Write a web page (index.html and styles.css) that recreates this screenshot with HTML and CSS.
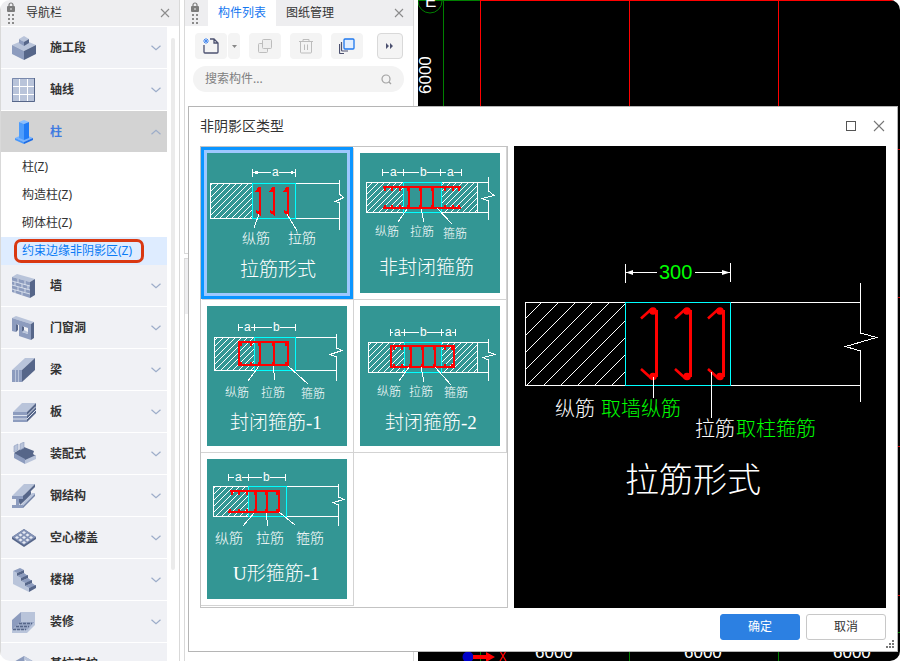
FILE: index.html
```html
<!DOCTYPE html>
<html lang="zh-CN">
<head>
  <meta charset="UTF-8">
  <meta name="viewport" content="width=device-width, initial-scale=1.0">
  <title>非阴影区类型</title>
  <link rel="stylesheet" href="styles.css">
</head>
<body>
  <!-- Shared symbols and hatch patterns -->
  <svg class="defs" width="0" height="0" aria-hidden="true">
    <defs>
      <symbol id="chevron" viewBox="0 0 10 6"><path d="M0.5 0.8 L5 4.8 L9.5 0.8" fill="none" stroke="#9dadc9" stroke-width="1.2"/></symbol>
      <symbol id="close" viewBox="0 0 10 10"><path d="M1 1 L9 9 M9 1 L1 9" fill="none" stroke="#8c8c8c" stroke-width="1.1"/></symbol>
      <symbol id="lock" viewBox="0 0 8 23">
        <path d="M2 5 V3 a2 2 0 0 1 4 0 V5" fill="none" stroke="#7c7c7c" stroke-width="1.2"/>
        <rect x="0" y="4" width="8" height="6" rx="1" fill="#7c7c7c"/>
        <rect x="3.5" y="6" width="1" height="2" fill="#eee"/>
        <path d="M1 12h2v2H1z M5 12h2v2H5z M1 16h2v2H1z M5 16h2v2H5z M1 20h2v2H1z M5 20h2v2H5z" fill="#8a8a8a"/>
      </symbol>
      <symbol id="hook" viewBox="0 0 18 74" overflow="visible">
        <path d="M1 11.500 L11 2.500 M1 62 L11 71" fill="none" stroke="#f00" stroke-width="2.600"/>
        <path d="M16.500 3 V70" stroke="#f00" stroke-width="3"/>
        <circle cx="13" cy="4" r="3.800" fill="#f00"/><circle cx="13" cy="69.500" r="3.800" fill="#f00"/>
      </symbol>
      <pattern id="hatch" width="6" height="6" patternUnits="userSpaceOnUse"><path d="M-1 1 l2 -2 M0 6 l6 -6 M5 7 l2 -2" stroke="#fff" shape-rendering="crispEdges"/></pattern>
      <pattern id="hatchBig" x="11" y="156" width="17" height="17" patternUnits="userSpaceOnUse"><path d="M-1 1 l2 -2 M0 17 l17 -17 M16 18 l2 -2" stroke="#fff" shape-rendering="crispEdges"/></pattern>
    </defs>
  </svg>

  <div class="app">
    <!-- Navigation -->
    <aside class="nav">
      <header class="panel-head">
        <svg class="lock"><use href="#lock"/></svg>
        <span class="panel-title">导航栏</span>
        <button type="button" class="close-btn" aria-label="关闭"><svg><use href="#close"/></svg></button>
      </header>
      <div class="nav-body">
        <div class="nav-list">
          <button type="button" class="nav-item">
            <svg class="nav-icon" viewBox="0 0 24 24"><path d="M0 9 12 4 24 9 12 15z" fill="#b9c4da"/><path d="M0 9 12 15V24L0 18z" fill="#8d9cbe"/><path d="M24 9 12 15V24L24 18z" fill="#566689"/><path d="M7 3 12 0 17 3 12 6z" fill="#b9c4da"/><path d="M7 3 12 6V10L7 7z" fill="#8d9cbe"/><path d="M17 3 12 6V10L17 7z" fill="#566689"/></svg>
            <span>施工段</span><svg class="chevron"><use href="#chevron"/></svg>
          </button>
          <button type="button" class="nav-item">
            <svg class="nav-icon" viewBox="0 0 24 24"><path d="M0 0H23V24H0z" fill="#b9c4da"/><path d="M.5 24V.5H23" fill="none" stroke="#7888ac"/><path d="M0 23.500H22.500V0" fill="none" stroke="#566689"/><path d="M7.500 1V23M15.500 1V23M1 8.500H22M1 16.500H22" stroke="#fff"/></svg>
            <span>轴线</span><svg class="chevron"><use href="#chevron"/></svg>
          </button>
          <button type="button" class="nav-item active">
            <svg class="nav-icon" viewBox="0 0 24 24"><path d="M3 18 12 14 21 18 12 22z" fill="#7ab5ff"/><path d="M3 18 12 22V24L3 20z" fill="#4797fb"/><path d="M21 18 12 22V24L21 20z" fill="#1c6ce6"/><path d="M7 2 12 0 17 2 12 4z" fill="#8abfff"/><path d="M7 2 12 4V20L7 18z" fill="#4f9dfb"/><path d="M17 2 12 4V20L17 18z" fill="#207bf5"/></svg>
            <span>柱</span><svg class="chevron up"><use href="#chevron"/></svg>
          </button>
          <div class="sub-list">
            <a href="#" class="sub-item">柱(Z)</a>
            <a href="#" class="sub-item">构造柱(Z)</a>
            <a href="#" class="sub-item">砌体柱(Z)</a>
            <a href="#" class="sub-item current">约束边缘非阴影区(Z)</a>
          </div>
          <button type="button" class="nav-item">
            <svg class="nav-icon" viewBox="0 0 24 24"><path d="M0 3 5 0 23 5 18 8z" fill="#b9c4da"/><path d="M0 3 18 8V24L0 18z" fill="#8d9cbe"/><path d="M18 8 23 5V21L18 24z" fill="#566689"/><path d="M0 7 18 12M0 11 18 16M0 15 18 20M6 5V9M13 7V11M3 8V12M10 10V14M16 11V15M6 13V17M13 14V18M3 16V19M10 18V21" stroke="#dde3ee" stroke-width=".9"/></svg>
            <span>墙</span><svg class="chevron"><use href="#chevron"/></svg>
          </button>
          <button type="button" class="nav-item">
            <svg class="nav-icon" viewBox="0 0 24 24"><path d="M0 2 4 0 22 6 19 8z" fill="#b9c4da"/><path d="M0 2 19 8V24L7 20V9L4 8V16L0 15zM10 10V16L16 18V12z" fill="#8d9cbe" fill-rule="evenodd"/><path d="M19 8 22 6V22L19 24z" fill="#566689"/><path d="M4 8 6 9V14L4 16zM10 10 12 11V15L10 16z" fill="#566689"/><path d="M10 16 12 14 16 16V18z" fill="#b9c4da"/></svg>
            <span>门窗洞</span><svg class="chevron"><use href="#chevron"/></svg>
          </button>
          <button type="button" class="nav-item">
            <svg class="nav-icon" viewBox="0 0 24 24"><path d="M0 12 13 0H23L10 12z" fill="#b9c4da"/><path d="M0 12H10V24H0z" fill="#8d9cbe"/><path d="M10 12 23 0V12L10 24z" fill="#566689"/><path d="M3.500 12V24M6.500 12V24" stroke="#b9c4da"/></svg>
            <span>梁</span><svg class="chevron"><use href="#chevron"/></svg>
          </button>
          <button type="button" class="nav-item">
            <svg class="nav-icon" viewBox="0 0 24 24"><path d="M1 12 10 3H24L15 12z" fill="#b9c4da"/><path d="M1 12H15V22H1z" fill="#8d9cbe"/><path d="M15 12 24 3V13L15 22z" fill="#566689"/><path d="M1 15.500H15L24 6.500M1 19H15L24 10" fill="none" stroke="#dde3ee"/></svg>
            <span>板</span><svg class="chevron"><use href="#chevron"/></svg>
          </button>
          <button type="button" class="nav-item">
            <svg class="nav-icon" viewBox="0 0 24 24"><path d="M2 11 12 5 22 9 21 12 24 14 13 20z" fill="#566689"/><path d="M2 4 6 2V8L2 10zM8 2 12 0V6L8 8z" fill="#b9c4da" stroke="#8d9cbe" stroke-width=".6"/><path d="M2 11 13 17V22L2 16z" fill="#8d9cbe"/><path d="M13 18 24 13V17L13 22z" fill="#b9c4da"/></svg>
            <span>装配式</span><svg class="chevron"><use href="#chevron"/></svg>
          </button>
          <button type="button" class="nav-item">
            <svg class="nav-icon" viewBox="0 0 24 24"><path d="M0 12 12 0H23L11 12z" fill="#b9c4da"/><path d="M11 12 23 0V3L11 15z" fill="#566689"/><path d="M6 15 19 7V11L8 21z" fill="#566689"/><path d="M9 21 20 9H23V11L11 24H9z" fill="#b9c4da"/><path d="M11 22 23 10V12L11 24z" fill="#7282a6"/><path d="M0 12H11V15H7V21H11V24H0V21H4V15H0z" fill="#8d9cbe"/></svg>
            <span>钢结构</span><svg class="chevron"><use href="#chevron"/></svg>
          </button>
          <button type="button" class="nav-item">
            <svg class="nav-icon" viewBox="0 0 24 24"><path d="M0 11 12 3 24 11V13L12 21 0 13z" fill="#566689"/><path d="M0 11 12 3 24 11 12 19z" fill="#8493b6"/><path d="M10 6.500 12 5 14 6.500 12 8zM6.500 9 8.500 7.500 10.500 9 8.500 10.500zM13.500 9 15.500 7.500 17.500 9 15.500 10.500zM10 11.500 12 10 14 11.500 12 13zM3 11.500 5 10 7 11.500 5 13zM17 11.500 19 10 21 11.500 19 13zM6.500 14 8.500 12.500 10.500 14 8.500 15.500zM13.500 14 15.500 12.500 17.500 14 15.500 15.500zM10 16.500 12 15 14 16.500 12 18z" fill="#e8ebf3"/></svg>
            <span>空心楼盖</span><svg class="chevron"><use href="#chevron"/></svg>
          </button>
          <button type="button" class="nav-item">
            <svg class="nav-icon" viewBox="0 0 24 24"><path d="M1 3 5 5V8L9 10V13L13 15V18L17 20V24L1 16z" fill="#b9c4da"/><path d="M1 3 8 0 12 2 5 5zM5 8 12 5 16 8 9 10zM9 13 16 10 20 13 13 15zM13 18 20 15 24 18 17 20z" fill="#8d9cbe"/><path d="M5 5 12 2V5L5 8zM9 10 16 7V10L9 13zM13 15 20 12V15L13 18zM17 20 24 17V20L17 24z" fill="#566689"/></svg>
            <span>楼梯</span><svg class="chevron"><use href="#chevron"/></svg>
          </button>
          <button type="button" class="nav-item">
            <svg class="nav-icon" viewBox="0 0 24 24"><path d="M9 2H23V12H9z" fill="#b9c4da"/><path d="M0 10 9 2V12L0 20z" fill="#8d9cbe"/><path d="M9 12H23L15 21H0V20z" fill="#9aa8c6"/><path d="M0 20H15L23 12V15L15 23H0z" fill="#b9c4da"/><path d="M7 13.500H20M4 16.500H17M1 19.500H14" stroke="#566689" stroke-width="1.400" stroke-dasharray="3 1"/></svg>
            <span>装修</span><svg class="chevron"><use href="#chevron"/></svg>
          </button>
          <button type="button" class="nav-item">
            <svg class="nav-icon" viewBox="0 0 24 24"><path d="M0 11 12 4 24 11V20H0z" fill="#8d9cbe"/><path d="M12 4 24 11V20H12z" fill="#b9c4da"/><path d="M13 8 16 10V16H13z" fill="#fff"/></svg>
            <span>基坑支护</span><svg class="chevron"><use href="#chevron"/></svg>
          </button>
        </div>
        <div class="scrollbar"><div class="thumb-bar"></div></div>
      </div>
    </aside>

    <!-- Component list -->
    <section class="side">
      <div class="components">
        <header class="panel-head">
          <svg class="lock"><use href="#lock"/></svg>
          <button type="button" class="tab selected">构件列表</button>
          <button type="button" class="tab">图纸管理</button>
          <button type="button" class="close-btn" aria-label="关闭"><svg><use href="#close"/></svg></button>
        </header>
        <div class="toolbar">
          <div class="split">
            <button type="button" class="tool" aria-label="新建"><svg width="16" height="16" viewBox="0 0 16 16" fill="none"><path d="M1 7V14a1 1 0 0 0 1 1H14a1 1 0 0 0 1 -1V5L11 1H7M11 1V5H15" stroke="#4c5170" stroke-width="1.300"/><path d="M1 1 5 5M5 1 1 5M3 0V6M0 3H6" stroke="#4a8cf0"/></svg></button>
            <button type="button" class="tool drop" aria-label="更多新建"><svg width="5" height="3" viewBox="0 0 5 3"><path d="M0 0H5L2.500 3z" fill="#888"/></svg></button>
          </div>
          <button type="button" class="tool" aria-label="复制"><svg width="16" height="16" viewBox="0 0 16 16" fill="#eee" stroke="#bdbdbd"><rect x="1.500" y="5.500" width="9" height="9" rx="1"/><rect x="5.500" y="1.500" width="9" height="9" rx="1"/></svg></button>
          <button type="button" class="tool" aria-label="删除"><svg width="16" height="16" viewBox="0 0 16 16" fill="none" stroke="#bdbdbd"><path d="M1 3.500H15M5 3V1.500H11V3M2.500 4V14a1 1 0 0 0 1 1H12.500a1 1 0 0 0 1 -1V4M6.500 6.500V12M9.500 6.500V12"/></svg></button>
          <button type="button" class="tool" aria-label="层间复制"><svg width="16" height="16" viewBox="0 0 16 16" fill="none" stroke="#4c5170"><path d="M.5 6V14.500a1 1 0 0 0 1 1H5M2.500 4V12a1 1 0 0 0 1 1H9" stroke-width="1.200"/><rect x="5" y="1" width="10" height="10" rx="1" fill="#e3efff" stroke="#1f78ee" stroke-width="1.300"/></svg></button>
          <button type="button" class="tool more" aria-label="更多"><svg width="8" height="6" viewBox="0 0 8 6"><path d="M0 0 3 3 0 6zM4 0 7 3 4 6z" fill="#4c5170"/></svg></button>
        </div>
        <div class="search">
          <input type="text" placeholder="搜索构件..." aria-label="搜索构件">
          <svg width="11" height="11" viewBox="0 0 11 11" fill="none" stroke="#a3a3a3" stroke-width="1.200"><circle cx="5" cy="5" r="4"/><path d="M8 8 10 10"/></svg>
        </div>
      </div>
      <div class="props"><div class="props-head"></div></div>
    </section>

    <!-- Drawing area -->
    <main class="canvas">
      <svg class="axes" width="482" height="661" viewBox="0 0 482 661">
        <path d="M62 .5H482M62.500 0V640M211.500 0V640M360.500 0V640" stroke="#f00" fill="none"/>
        <path d="M0 .5H62M25.500 0V640" stroke="#008000" fill="none"/>
        <path d="M62.500 640V661M211.500 640V661M360.500 640V661M480 632.500H482" stroke="#008000"/>
        <path d="M480 149.500H482M480 297.500H482M480 446.500H482M480 595.500H482" stroke="#c00"/>
        <circle cx="12" cy="1" r="12" fill="none" stroke="#008000"/>
        <text x="7" y="7" class="axis-text">E</text>
        <text transform="translate(13 94) rotate(-90)" class="axis-text">6000</text>
        <text x="117" y="658" class="axis-text">6000</text>
        <text x="266" y="658" class="axis-text">6000</text>
        <text x="415" y="658" class="axis-text">6000</text>
        <circle cx="50" cy="657" r="5.500" fill="#0000c8"/>
        <path d="M55 655H68V652L77 657 68 662V659H55z" fill="#f00"/>
        <path d="M82 651 88 661M88 651 82 661" stroke="#f00" stroke-width="1.300"/>
      </svg>
    </main>

    <!-- Type dialog -->
    <div class="dialog" role="dialog" aria-label="非阴影区类型">
      <header class="dialog-head">
        <h1>非阴影区类型</h1>
        <button type="button" class="win-btn" aria-label="最大化"><svg width="12" height="12" viewBox="0 0 12 12"><rect x="1.500" y="1.500" width="9" height="9" fill="none" stroke="#555"/></svg></button>
        <button type="button" class="win-btn" aria-label="关闭"><svg width="12" height="12" viewBox="0 0 12 12"><path d="M1 1 11 11M11 1 1 11" stroke="#777" stroke-width="1.100"/></svg></button>
      </header>
      <div class="dialog-body">
        <div class="types">
          <button type="button" class="type selected">
            <svg class="figure" viewBox="0 0 140 140">
              <rect x="3.500" y="30.500" width="42" height="35" class="wall hatched"/>
              <path class="wall" d="M45 30.500H132.500M45 65.500H132.500M132.500 27V41L136.500 44.500 128.500 48.500 132.500 50V77"/>
              <rect x="45.500" y="30.500" width="43" height="35" class="edge"/>
              <path class="wall" d="M45.500 16V24M88.500 16V24M46 19.500H64M72 19.500H88M46 19.500l4 -1v2zM88 19.500l-4 -1v2z"/>
              <path class="bar" d="M49 39 52 35H53V61L49 58M63 39 66 35H67V61L63 58M77 39 80 35H81V61L77 58"/>
              <path class="node" d="M50 37h3M64 37h3M78 37h3M50 59h3M64 59h3M78 59h3"/>
              <path class="leader" d="M52 61 47 75M80 61 90 78"/>
              <text x="65" y="23" class="dim">a</text>
              <text x="35" y="90" class="label-l">纵筋</text><text x="81" y="90" class="label-l">拉筋</text>
              <text x="33" y="123" class="name">拉筋形式</text>
            </svg>
          </button>
          <button type="button" class="type">
            <svg class="figure" viewBox="0 0 140 140">
              <rect x="6.500" y="29.500" width="37" height="30" class="wall hatched"/>
              <rect x="81.500" y="29.500" width="36" height="30" class="wall hatched"/>
              <path class="wall" d="M117 29.500H128.500M117 59.500H128.500M128.500 24V38L134 42.500 122 45.500 128.500 48V67"/>
              <rect x="43.500" y="29.500" width="38" height="30" class="edge"/>
              <path class="wall" d="M22.500 16V23M43.500 16V23M80.500 16V23M101.500 16V23M23 19.500H29M37 19.500H59M67 19.500H86M94 19.500H101"/>
              <path class="bar" d="M23 34H101M23 55H101M49 34V55M61 34V55M73 34V55"/>
              <path class="node" d="M24 36h2M31 36h2M39 36h2M47 36h2M59 36h2M71 36h2M84 36h2M92 36h2M98 36h2M24 53h2M31 53h2M39 53h2M47 53h2M59 53h2M71 53h2M84 53h2M92 53h2M98 53h2"/>
              <path class="leader" d="M47 56 38 69M61 56 64 69M77 55 92 71"/>
              <text x="30" y="23" class="dim">a</text><text x="60" y="23" class="dim">b</text><text x="87" y="23" class="dim">a</text>
              <text x="15" y="83" class="label">纵筋</text><text x="50" y="83" class="label">拉筋</text><text x="83" y="85" class="label">箍筋</text>
              <text x="19" y="121" class="name">非封闭箍筋</text>
            </svg>
          </button>
          <button type="button" class="type">
            <svg class="figure" viewBox="0 0 140 140">
              <rect x="7.500" y="31.500" width="40" height="33" class="wall hatched"/>
              <path class="wall" d="M47 31.500H129.500M47 64.500H129.500M129.500 28V42L135 44.500 123 48.500 129.500 51V75"/>
              <rect x="47.500" y="31.500" width="41" height="33" class="edge"/>
              <path class="wall" d="M31.500 18V25M47.500 18V25M88.500 18V25M32 21.500H36M44 21.500H65M73 21.500H88"/>
              <path class="bar" d="M32 36H81V59H32zM53 36V59M67 36V59"/>
              <path class="node" d="M33 38h2M43 38h2M51 38h2M65 38h2M78 38h2M33 57h2M43 57h2M51 57h2M65 57h2M78 57h2"/>
              <path class="leader" d="M52 60 41 75M66 60 68 74M81 60 101 78"/>
              <text x="37" y="25" class="dim">a</text><text x="66" y="25" class="dim">b</text>
              <text x="18" y="91" class="label">纵筋</text><text x="54" y="91" class="label">拉筋</text><text x="94" y="92" class="label">箍筋</text>
              <text x="23" y="123" class="name">封闭箍筋-1</text>
            </svg>
          </button>
          <button type="button" class="type">
            <svg class="figure" viewBox="0 0 140 140">
              <rect x="8.500" y="36.500" width="36" height="30" class="wall hatched"/>
              <rect x="81.500" y="36.500" width="36" height="30" class="wall hatched"/>
              <path class="wall" d="M117 36.500H128.500M117 66.500H128.500M128.500 33V46L135 48.500 123 51.500 128.500 54V75"/>
              <rect x="44.500" y="36.500" width="37" height="30" class="edge"/>
              <path class="wall" d="M30.500 23V30M44.500 23V30M81.500 23V30M95.500 23V30M31 26.500H33M41 26.500H59M67 26.500H84M92 26.500H95"/>
              <path class="bar" d="M31 40H94V61H31zM51 40V61M63 40V61M75 40V61"/>
              <path class="node" d="M33 42h2M41 42h2M49 42h2M61 42h2M73 42h2M84 42h2M91 42h2M33 59h2M41 59h2M49 59h2M61 59h2M73 59h2M84 59h2M91 59h2"/>
              <path class="leader" d="M49 61 39 75M61 61 64 76M75 61 91 79"/>
              <text x="34" y="30" class="dim">a</text><text x="60" y="30" class="dim">b</text><text x="85" y="30" class="dim">a</text>
              <text x="17" y="90" class="label">纵筋</text><text x="49" y="90" class="label">拉筋</text><text x="84" y="91" class="label">箍筋</text>
              <text x="25" y="123" class="name">封闭箍筋-2</text>
            </svg>
          </button>
          <button type="button" class="type">
            <svg class="figure" viewBox="0 0 140 140">
              <rect x="6.500" y="27.500" width="35" height="30" class="wall hatched"/>
              <path class="wall" d="M41 27.500H131.500M41 57.500H131.500M131.500 25V38L137 40.500 126 43.500 131.500 46V67"/>
              <rect x="41.500" y="27.500" width="38" height="30" class="edge"/>
              <path class="wall" d="M21.500 15V22M41.500 15V22M78.500 15V22M22 18.500H27M35 18.500H55M63 18.500H78"/>
              <path class="bar" d="M23 32H72V53H21M49 32V53M60 32V53"/>
              <path class="node" d="M24 34h2M31 34h2M39 34h2M47 34h2M58 34h2M69 34h2M22 51h2M31 51h2M39 51h2M47 51h2M58 51h2M69 51h2"/>
              <path class="leader" d="M47 54 36 67M59 54 61 67M72 53 88 66"/>
              <text x="28" y="22" class="dim">a</text><text x="56" y="22" class="dim">b</text>
              <text x="8" y="84" class="label-l">纵筋</text><text x="49" y="84" class="label-l">拉筋</text><text x="89" y="84" class="label-l">箍筋</text>
              <text x="26" y="121" class="name">U形箍筋-1</text>
            </svg>
          </button>
        </div>

        <div class="preview">
          <svg viewBox="0 0 372 462">
            <rect x="11.500" y="156.500" width="100" height="83" class="wall hatched-big"/>
            <path class="wall" d="M111 156.500H346.500M111 239.500H346.500M346.500 137V187L362.500 191.500 331.500 200.500 346.500 205V256"/>
            <rect x="111.500" y="156.500" width="105" height="83" class="edge"/>
            <path class="wall" d="M111.500 118V137M216.500 117V136M112 126.500H143M181 126.500H216"/>
            <path d="M112 126.500 119 124V129zM216 126.500 208 124V129z" fill="#fff"/>
            <use href="#hook" x="126" y="161" width="18" height="74"/>
            <use href="#hook" x="160" y="161" width="18" height="74"/>
            <use href="#hook" x="193" y="161" width="18" height="74"/>
            <path class="wall" d="M139.500 231V252M197.500 226V272"/>
            <text x="145" y="133" class="value">300</text>
            <text x="41" y="270" class="note">纵筋</text><text x="87" y="270" class="note value">取墙纵筋</text>
            <text x="181" y="290" class="note">拉筋</text><text x="222" y="290" class="note value">取柱箍筋</text>
            <text x="111" y="346" class="headline">拉筋形式</text>
          </svg>
        </div>
      </div>
      <footer class="dialog-foot">
        <button type="button" class="btn primary">确定</button>
        <button type="button" class="btn">取消</button>
      </footer>
      <svg class="grip" width="8" height="8" viewBox="0 0 8 8"><path d="M6 0h2v2H6zM3 3h2v2H3zM6 3h2v2H6zM0 6h2v2H0zM3 6h2v2H3zM6 6h2v2H6z" fill="#777"/></svg>
    </div>
  </div>
</body>
</html>
```
FILE: styles.css
```css
*, *::after {
  box-sizing: border-box;
}

body {
  margin: 0;
  background: #fff;
  font-family: "Noto Sans", "Noto Sans CJK SC", sans-serif;
  font-size: 12px;
  line-height: 18px;
  color: #333;
}

button, input {
  font: inherit;
  color: inherit;
  margin: 0;
  padding: 0;
  border: none;
  background: none;
}

svg {
  display: block;
  flex: none;
}

.defs {
  position: absolute;
}

.app {
  position: relative;
  display: flex;
  height: 100vh;
  overflow: hidden;
  border-radius: 10px;
}

/* panels */
.panel-head {
  display: flex;
  align-items: center;
  height: 26px;
  background: #eeeef0;
}

.lock {
  width: 8px;
  height: 23px;
  margin: 0 9px 0 6px;
}

.panel-title {
  margin-left: 2px;
}

.close-btn {
  margin-left: auto;
  margin-right: 9px;
}

.close-btn svg {
  width: 10px;
  height: 10px;
}

.nav {
  display: flex;
  flex-direction: column;
  width: 180px;
  flex: none;
  border: solid #d9d9d9;
  border-width: 0 1px;
}

.nav-body {
  display: flex;
  flex: 1;
  min-height: 0;
  padding-top: 1px;
}

.nav-list {
  flex: 1;
  overflow: hidden;
}

.nav-item {
  display: flex;
  align-items: center;
  width: 100%;
  height: 42px;
  padding: 0 6px 0 11px;
  border-bottom: 1px solid #fff;
  background: #f0f1f5;
  font-weight: 600;
  text-align: left;
}

.nav-item.active {
  background: #d3d3d3;
  color: #3f7be0;
}

.nav-icon {
  width: 24px;
  height: 24px;
  margin-right: 14px;
}

.chevron {
  width: 10px;
  height: 6px;
  margin-left: auto;
}

.chevron.up {
  transform: rotate(180deg);
}

.sub-item {
  position: relative;
  display: block;
  padding: 5px 0 5px 21px;
  color: #333;
  text-decoration: none;
}

.sub-item.current {
  background: #deecff;
  color: #0b7bf5;
}

.sub-item.current::after {
  content: "";
  position: absolute;
  top: 2px;
  bottom: 2px;
  left: 13px;
  width: 130px;
  border: 3px solid #d93812;
  border-radius: 7px;
}

.scrollbar {
  width: 12px;
  padding: 11px 4px 0;
}

.thumb-bar {
  width: 4px;
  height: 532px;
  border-radius: 2px;
  background: #ebebeb;
}

.side {
  display: flex;
  flex-direction: column;
  gap: 4px;
  width: 230px;
  flex: none;
  margin-left: 4px;
}

.components, .props {
  border: 1px solid #d9d9d9;
}

.components {
  height: 254px;
  border-top: none;
}

.props {
  flex: 1;
  border-bottom: none;
}

.props-head {
  height: 55px;
  background: #eeeef0;
}

.tab {
  height: 26px;
  padding: 0 10px;
}

.tab.selected {
  background: #fff;
  color: #1677f0;
}

.toolbar {
  display: flex;
  gap: 9px;
  padding: 7px 10px 0;
}

.split {
  display: flex;
  gap: 1px;
}

.tool {
  display: flex;
  align-items: center;
  justify-content: center;
  width: 32px;
  height: 26px;
  border-radius: 4px;
  background: #f4f4f4;
}

.tool.drop {
  width: 12px;
}

.tool.more {
  width: 26px;
  margin-left: auto;
  border: 1px solid #d9d9d9;
}

.search {
  display: flex;
  align-items: center;
  height: 26px;
  margin: 7px 9px 0 8px;
  padding: 0 12px;
  border-radius: 13px;
  background: #f3f3f3;
}

.search input {
  flex: 1;
  min-width: 0;
  outline: none;
}

.search input::placeholder {
  color: #808080;
}

/* drawing area */
.canvas {
  flex: 1;
  min-width: 0;
  margin-left: 4px;
  overflow: hidden;
  background: #000;
}

.axis-text {
  font: 17px "Liberation Sans", sans-serif;
  fill: #fff;
}

/* dialog */
.dialog {
  position: absolute;
  top: 106px;
  left: 188px;
  right: 2px;
  padding: 0 11px 11px;
  border: 1px solid #b5b5b5;
  background: #fff;
}

.dialog-head {
  display: flex;
  align-items: center;
  gap: 16px;
  height: 39px;
  padding: 0 1px 2px 0;
}

.dialog-head h1 {
  flex: 1;
  margin: 0;
  font-size: 14px;
  font-weight: 400;
}

.dialog-body {
  display: flex;
  gap: 6px;
}

.types {
  display: grid;
  grid-template-columns: 153px 153px;
  grid-auto-rows: 153px;
  border: 1px solid #c3c3c3;
}

.type {
  padding: 6px;
  border: solid #d3d3d3;
  border-width: 0 1px 1px 0;
}

.type.selected {
  margin: 0 1px 1px 0;
  padding: 3px;
  border: 3px solid #0b95ff;
  background: #9ec8ff;
  box-shadow: 1px 1px 0 #d3d3d3;
}

.figure {
  width: 140px;
  height: 140px;
  background: #339694;
}

.wall, .edge, .bar, .node, .leader {
  fill: none;
  shape-rendering: crispEdges;
}

.wall, .leader {
  stroke: #fff;
}

.hatched {
  fill: url(#hatch);
}

.hatched-big {
  fill: url(#hatchBig);
}

.edge {
  stroke: #0ff;
}

.bar {
  stroke: #f00;
  stroke-width: 2;
}

.node {
  stroke: #f00;
  stroke-width: 3;
}

.figure text, .preview text {
  font-family: "Liberation Serif", "Noto Sans CJK SC", serif;
  font-weight: 300;
  fill: #fff;
}

.figure .dim {
  font-family: "Liberation Sans", sans-serif;
  font-size: 12px;
}

.label {
  font-size: 12px;
}

.label-l {
  font-size: 14px;
}

.name {
  font-size: 19px;
}

.preview {
  flex: 1;
  background: #000;
}

.preview svg {
  width: 100%;
  height: 462px;
}

.preview .value {
  font-family: "Liberation Sans", "Noto Sans CJK SC", sans-serif;
  font-size: 20px;
  fill: #0f0;
}

.note {
  font-size: 20px;
}

.headline {
  font-size: 34px;
}

.dialog-foot {
  display: flex;
  justify-content: flex-end;
  gap: 6px;
  padding-top: 6px;
}

.btn {
  width: 80px;
  height: 26px;
  border: 1px solid #c8c8c8;
  border-radius: 3px;
  background: #fff;
}

.btn.primary {
  border-color: #2c80e2;
  background: #2c80e2;
  color: #fff;
}

.grip {
  position: absolute;
  right: 3px;
  bottom: 3px;
}
```
